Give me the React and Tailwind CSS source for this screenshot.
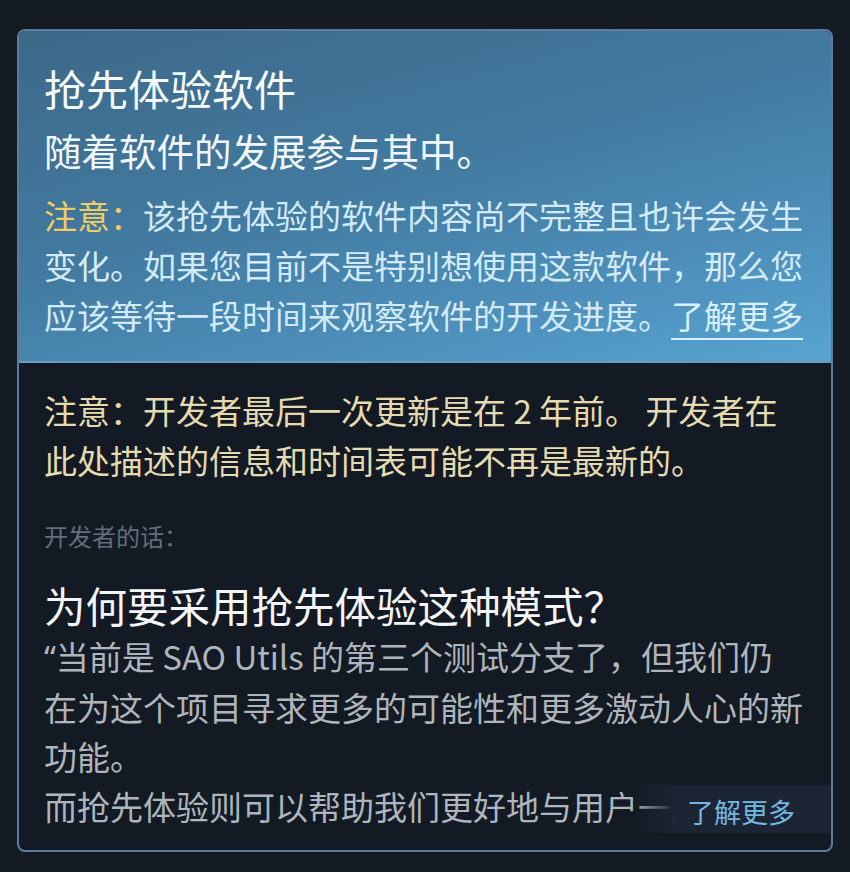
import React from "react";

const font = { fontFamily: '"Noto Sans CJK SC", "Noto Sans", sans-serif' };

export default function App() {
  return (
    <div
      className="w-[850px] h-[872px] bg-[#151b23] pt-[29px] px-[17px] overflow-hidden"
      style={font}
    >
      <div className="w-[816px] h-[823px] rounded-[8px] border-2 border-[#5b7c9c] bg-[#131a23] overflow-hidden flex flex-col">
        {/* Top early-access panel */}
        <div className="bg-[linear-gradient(165deg,#3d6888_0%,#427aa0_45%,#4f93bf_80%,#58a4d0_100%)] border-b-2 border-[#6b9cc0] pl-[25px] pr-[24px] pt-[32px] pb-[21px]">
          <div className="text-[42px] leading-[50px] text-[#f4fbff]">抢先体验软件</div>
          <div className="mt-[12px] text-[37.5px] leading-[50px] text-[#f0f8fd]">
            随着软件的发展参与其中。
          </div>
          <p className="mt-[15px] text-[33px] leading-[50px] text-[#d3ebf8]">
            <span className="text-[#f1cd62]">注意：</span>
            该抢先体验的软件内容尚不完整且也许会发生变化。如果您目前不是特别想使用这款软件，那么您应该等待一段时间来观察软件的开发进度。
            <span className="underline decoration-2 underline-offset-[9px] text-[#d8f0fc]">了解更多</span>
          </p>
        </div>

        {/* Dark developer section */}
        <div className="relative flex-1 pl-[25px] pr-[24px] pt-[22px]">
          <p className="text-[33px] leading-[50px] text-[#e6dab0] whitespace-nowrap">
            注意：开发者最后一次更新是在 2 年前。 开发者在
            <br />
            此处描述的信息和时间表可能不再是最新的。
          </p>
          <div className="mt-[33px] text-[24px] leading-[36px] text-[#626e7b]">开发者的话：</div>
          <div className="mt-[26px] text-[41.5px] leading-[50px] text-[#f3f5f7]">
            为何要采用抢先体验这种模式？
          </div>
          <div className="mt-[2px] h-[198px] overflow-hidden text-[33px] leading-[49.5px] text-[#aeb5bc]">
            <p className="whitespace-nowrap">
              <span style={{ fontFamily: '"Noto Sans", sans-serif' }}>“</span>当前是 SAO Utils 的第三个测试分支了，但我们仍
              <br />
              在为这个项目寻求更多的可能性和更多激动人心的新
              <br />
              功能。
            </p>
            <p className="whitespace-nowrap">而抢先体验则可以帮助我们更好地与用户一起开发</p>
          </div>
          <div className="absolute right-0 bottom-[17px] w-[200px] h-[48px] bg-[linear-gradient(90deg,rgba(27,37,51,0)_0%,#1b2533_22%,#1b2533_100%)] flex items-center justify-end pr-[36px]">
            <span className="text-[27px] leading-[36px] text-[#74b6e2] mt-[6px]">了解更多</span>
          </div>
        </div>
      </div>
    </div>
  );
}
